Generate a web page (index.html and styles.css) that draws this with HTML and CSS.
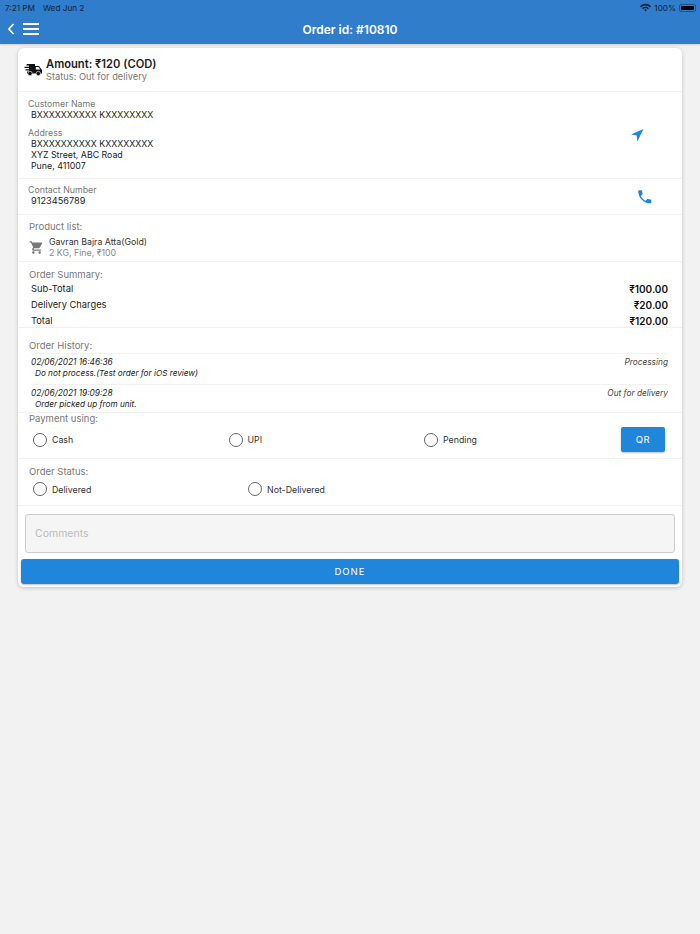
FILE: index.html
```html
<!DOCTYPE html>
<html lang="en">
<head>
    <meta charset="UTF-8">
    <meta name="viewport" content="width=device-width, initial-scale=1.0">
    <title>Order id: #10810</title>
    <link rel="stylesheet" href="styles.css">
</head>
<body>
    <header class="topbar">
        <div class="statusbar">
            <span class="status-time">7:21 PM</span>
            <span class="status-date">Wed Jun 2</span>
            <span class="status-right">
                <svg class="wifi" viewBox="0 0 12 9" width="11" height="9">
                    <path d="M0 3 A8.500 8.500 0 0 1 12 3 L10.800 4.200 A6.800 6.800 0 0 0 1.200 4.200 Z" fill="#10233a"/>
                    <path d="M2.300 5.200 A5.200 5.200 0 0 1 9.700 5.200 L8.500 6.400 A3.500 3.500 0 0 0 3.500 6.400 Z" fill="#10233a"/>
                    <path d="M4.500 7.300 A2.100 2.100 0 0 1 7.500 7.300 L6 8.900 Z" fill="#10233a"/>
                </svg>
                <span>100%</span>
                <span class="battery"><span class="battery-fill"></span></span>
            </span>
        </div>
        <div class="navbar">
            <svg class="back" viewBox="0 0 8 12" width="8" height="12">
                <path d="M6.500 1 L1.900 6 L6.500 11" fill="none" stroke="#fff" stroke-width="1.700"/>
            </svg>
            <div class="burger"><span></span><span></span><span></span></div>
            <h1 class="nav-title">Order id: #10810</h1>
        </div>
    </header>

    <main class="card">
        <section class="amount-row">
            <svg class="truck" viewBox="0 0 18 13" width="18" height="13">
                <path d="M3 1 H11 V3 H15 L18 7 V10.500 H3 V8.500 H5 V7.500 H1.500 V6.300 H5 V5 H0.500 V3.800 H5 V2.600 H2 Z" fill="#111"/>
                <path d="M11.800 4 H14.500 L16.300 6.600 H11.800 Z" fill="#fff"/>
                <circle cx="6" cy="10.500" r="2.200" fill="#111" stroke="#fff" stroke-width=".6"/>
                <circle cx="14.300" cy="10.500" r="2.200" fill="#111" stroke="#fff" stroke-width=".6"/>
            </svg>
            <div>
                <div class="amount">Amount: ₹120 (COD)</div>
                <div class="amount-status">Status: Out for delivery</div>
            </div>
        </section>

        <section class="address-block">
            <div class="address-text">
                <div class="label">Customer Name</div>
                <div class="value">BXXXXXXXXXX KXXXXXXXX</div>
                <div class="label label-gap">Address</div>
                <div class="value">BXXXXXXXXXX KXXXXXXXX</div>
                <div class="value">XYZ Street, ABC Road</div>
                <div class="value">Pune, 411007</div>
            </div>
            <svg class="nav-icon" viewBox="0 0 13 13" width="13" height="13">
                <path d="M0 5.500 L12.500 0 L6.300 12.500 L5.800 6.500 Z" fill="#2086dc"/>
            </svg>
        </section>

        <section class="contact-block">
            <div>
                <div class="label">Contact Number</div>
                <div class="value value-phone">9123456789</div>
            </div>
            <svg class="phone-icon" viewBox="0 0 24 24" width="17.500" height="17.500">
                <path d="M6.600 10.800c1.400 2.800 3.800 5.100 6.600 6.600l2.200-2.200c.3-.3.7-.4 1-.2 1.100.4 2.300.6 3.600.6.600 0 1 .4 1 1V20c0 .6-.4 1-1 1C10.600 21 3 13.400 3 4c0-.6.4-1 1-1h3.500c.6 0 1 .4 1 1 0 1.300.2 2.500.6 3.600.1.300 0 .7-.2 1z" fill="#2086dc"/>
            </svg>
        </section>

        <section class="product-block">
            <div class="section-title">Product list:</div>
            <div class="product-row">
                <svg class="cart" viewBox="0 0 24 24" width="15" height="15">
                    <path d="M7 18c-1.100 0-2 .9-2 2s.9 2 2 2 2-.9 2-2-.9-2-2-2zM1 2v2h2l3.600 7.600-1.400 2.400c-.7 1.300.3 3 1.800 3h12v-2H7.400c-.1 0-.2-.1-.2-.2v-.1l.9-1.700h7.500c.7 0 1.400-.4 1.700-1l3.600-6.500c.4-.7-.1-1.500-.9-1.500H5.200L4.300 2zM17 18c-1.100 0-2 .9-2 2s.9 2 2 2 2-.9 2-2-.9-2-2-2z" fill="#777"/>
                </svg>
                <div>
                    <div class="product-name">Gavran Bajra Atta(Gold)</div>
                    <div class="product-meta">2 KG, Fine, ₹100</div>
                </div>
            </div>
        </section>

        <section class="summary-block">
            <div class="section-title">Order Summary:</div>
            <div class="summary-row"><span>Sub-Total</span><b>₹100.00</b></div>
            <div class="summary-row"><span>Delivery Charges</span><b>₹20.00</b></div>
            <div class="summary-row"><span>Total</span><b>₹120.00</b></div>
        </section>

        <section class="history-block">
            <div class="section-title">Order History:</div>
            <div class="history-item">
                <div class="history-top"><span>02/06/2021 16:46:36</span><span class="history-state">Processing</span></div>
                <div class="history-note">Do not process.(Test order for iOS review)</div>
            </div>
            <div class="history-item">
                <div class="history-top"><span>02/06/2021 19:09:28</span><span class="history-state">Out for delivery</span></div>
                <div class="history-note">Order picked up from unit.</div>
            </div>
        </section>

        <section class="payment-block">
            <div class="section-title">Payment using:</div>
            <div class="payment-row">
                <label class="radio radio-pay"><span class="circle"></span>Cash</label>
                <label class="radio radio-pay"><span class="circle"></span>UPI</label>
                <label class="radio radio-pay"><span class="circle"></span>Pending</label>
                <button class="qr-btn">QR</button>
            </div>
        </section>

        <section class="status-block">
            <div class="section-title">Order Status:</div>
            <div class="status-row">
                <label class="radio radio-status"><span class="circle"></span>Delivered</label>
                <label class="radio"><span class="circle"></span>Not-Delivered</label>
            </div>
        </section>

        <div class="comments-wrap">
            <div class="comments">Comments</div>
        </div>
        <button class="done-btn">DONE</button>
    </main>
</body>
</html>
```

FILE: styles.css
```css
* {
    box-sizing: border-box;
}
body {
    font-family: Inter, "Noto Sans", sans-serif;
    margin: 0;
    height: 934px;
    overflow: hidden;
    background-color: #f2f2f2;
    color: #222;
}
.topbar {
    height: 44px;
    background-color: #2f7dcb;
    box-shadow: 0 1px 2px rgba(0, 0, 0, 0.15);
}
.statusbar {
    height: 14px;
    padding: 1px 4px 0 5px;
    display: flex;
    align-items: center;
    font-size: 8.2px;
    color: #10233a;
}
.status-date {
    margin-left: 8px;
}
.status-right {
    margin-left: auto;
    display: flex;
    align-items: center;
    gap: 3px;
}
.battery {
    width: 17px;
    height: 8px;
    border: 1px solid rgba(16, 35, 58, 0.5);
    border-radius: 2px;
    padding: 1px;
    display: flex;
}
.battery-fill {
    flex: 1;
    background-color: #000;
    border-radius: 1px;
}
.navbar {
    position: relative;
    height: 30px;
    display: flex;
    align-items: center;
    padding-left: 7px;
}
.burger {
    margin-left: 8px;
    width: 16px;
    display: flex;
    flex-direction: column;
    gap: 3px;
}
.burger span {
    height: 2px;
    background-color: #fff;
}
.nav-title {
    position: absolute;
    left: 0;
    right: 0;
    margin: 0;
    text-align: center;
    font-size: 12px;
    font-weight: 600;
    color: #fff;
}
.card {
    width: 664px;
    margin: 4px 0 0 18px;
    background-color: #fff;
    border-radius: 6px;
    box-shadow: 0 1px 4px rgba(0, 0, 0, 0.2);
    font-size: 9.3px;
    height: 539px;
}
.card section {
    border-bottom: 1px solid #f1f1f1;
}
.amount-row {
    height: 44px;
    display: flex;
    align-items: center;
    padding-left: 6px;
    gap: 4px;
}
.amount {
    font-size: 11.2px;
    font-weight: 600;
    color: #1c1c1c;
    line-height: 14px;
}
.amount-status {
    font-size: 9.3px;
    color: #777;
    line-height: 12px;
}
.address-block {
    height: 87px;
    padding-top: 6px;
    position: relative;
}
.contact-block {
    height: 36px;
    padding-top: 5px;
    position: relative;
}
.label {
    font-size: 8.8px;
    color: #777;
    line-height: 11px;
    padding-left: 10px;
}
.label-gap {
    margin-top: 7px;
}
.value {
    font-size: 8.8px;
    color: #222;
    line-height: 11px;
    padding-left: 13px;
}
.value-phone {
    font-size: 9.2px;
}
.nav-icon {
    position: absolute;
    right: 38px;
    top: 37px;
}
.phone-icon {
    position: absolute;
    right: 29px;
    top: 9px;
}
.section-title {
    font-size: 9.5px;
    color: #777;
    line-height: 12px;
    padding-left: 11px;
}
.product-block {
    height: 47px;
    padding-top: 6px;
}
.product-row {
    display: flex;
    align-items: center;
    margin-top: 3px;
    padding-left: 11px;
    gap: 5px;
}
.product-name {
    font-size: 8.8px;
    line-height: 11px;
    color: #333;
}
.product-meta {
    font-size: 8.8px;
    line-height: 11px;
    color: #888;
}
.summary-block {
    height: 66px;
    padding-top: 7px;
}
.summary-row {
    display: flex;
    justify-content: space-between;
    padding: 0 14px 0 13px;
    height: 15.9px;
    line-height: 16px;
    font-size: 9.3px;
}
.summary-row b {
    font-size: 10px;
    font-weight: 600;
    color: #111;
}
.history-block {
    height: 85px;
    padding-top: 12px;
}
.history-item {
    margin: 1px 14px 0 13px;
    border-top: 1px solid #f1f1f1;
    padding-top: 3px;
    height: 30px;
    font-size: 8.3px;
    font-style: italic;
    color: #222;
    line-height: 11px;
}
.history-top {
    display: flex;
    justify-content: space-between;
}
.history-state {
    color: #444;
}
.history-note {
    font-size: 8.2px;
    padding-left: 4px;
}
.payment-block {
    height: 46px;
}
.payment-row {
    display: flex;
    align-items: center;
    padding: 0 17px 0 15px;
    margin-top: 2px;
}
.status-block {
    height: 47px;
    padding-top: 7px;
}
.status-row {
    display: flex;
    margin-top: 1px;
    padding-left: 15px;
}
.radio {
    display: flex;
    align-items: center;
    gap: 5px;
    font-size: 8.8px;
    color: #333;
    height: 20px;
}
.radio-pay {
    width: 195.5px;
}
.radio-status {
    width: 215px;
}
.circle {
    width: 14px;
    height: 14px;
    border: 1.5px solid #666;
    border-radius: 50%;
}
.qr-btn {
    margin-left: auto;
    width: 44px;
    height: 25px;
    background-color: #2086dc;
    color: #fff;
    border: 0;
    border-radius: 2px;
    font: 400 9.5px Inter, sans-serif;
    letter-spacing: 0.5px;
    box-shadow: 0 1px 2px rgba(0, 0, 0, 0.25);
}
.comments-wrap {
    padding: 8px 7px 0;
}
.comments {
    height: 39px;
    background-color: #f5f5f5;
    border: 1px solid #ccc;
    border-radius: 3px;
    padding-left: 9px;
    line-height: 37px;
    font-size: 10.5px;
    color: #bbb;
}
.done-btn {
    display: block;
    width: 658px;
    height: 25px;
    margin: 6px 0 0 3px;
    background-color: #2086dc;
    color: #fff;
    border: 0;
    border-radius: 3px;
    font: 400 9.5px Inter, sans-serif;
    letter-spacing: 1px;
    box-shadow: 0 1px 2px rgba(0, 0, 0, 0.25);
}
```
